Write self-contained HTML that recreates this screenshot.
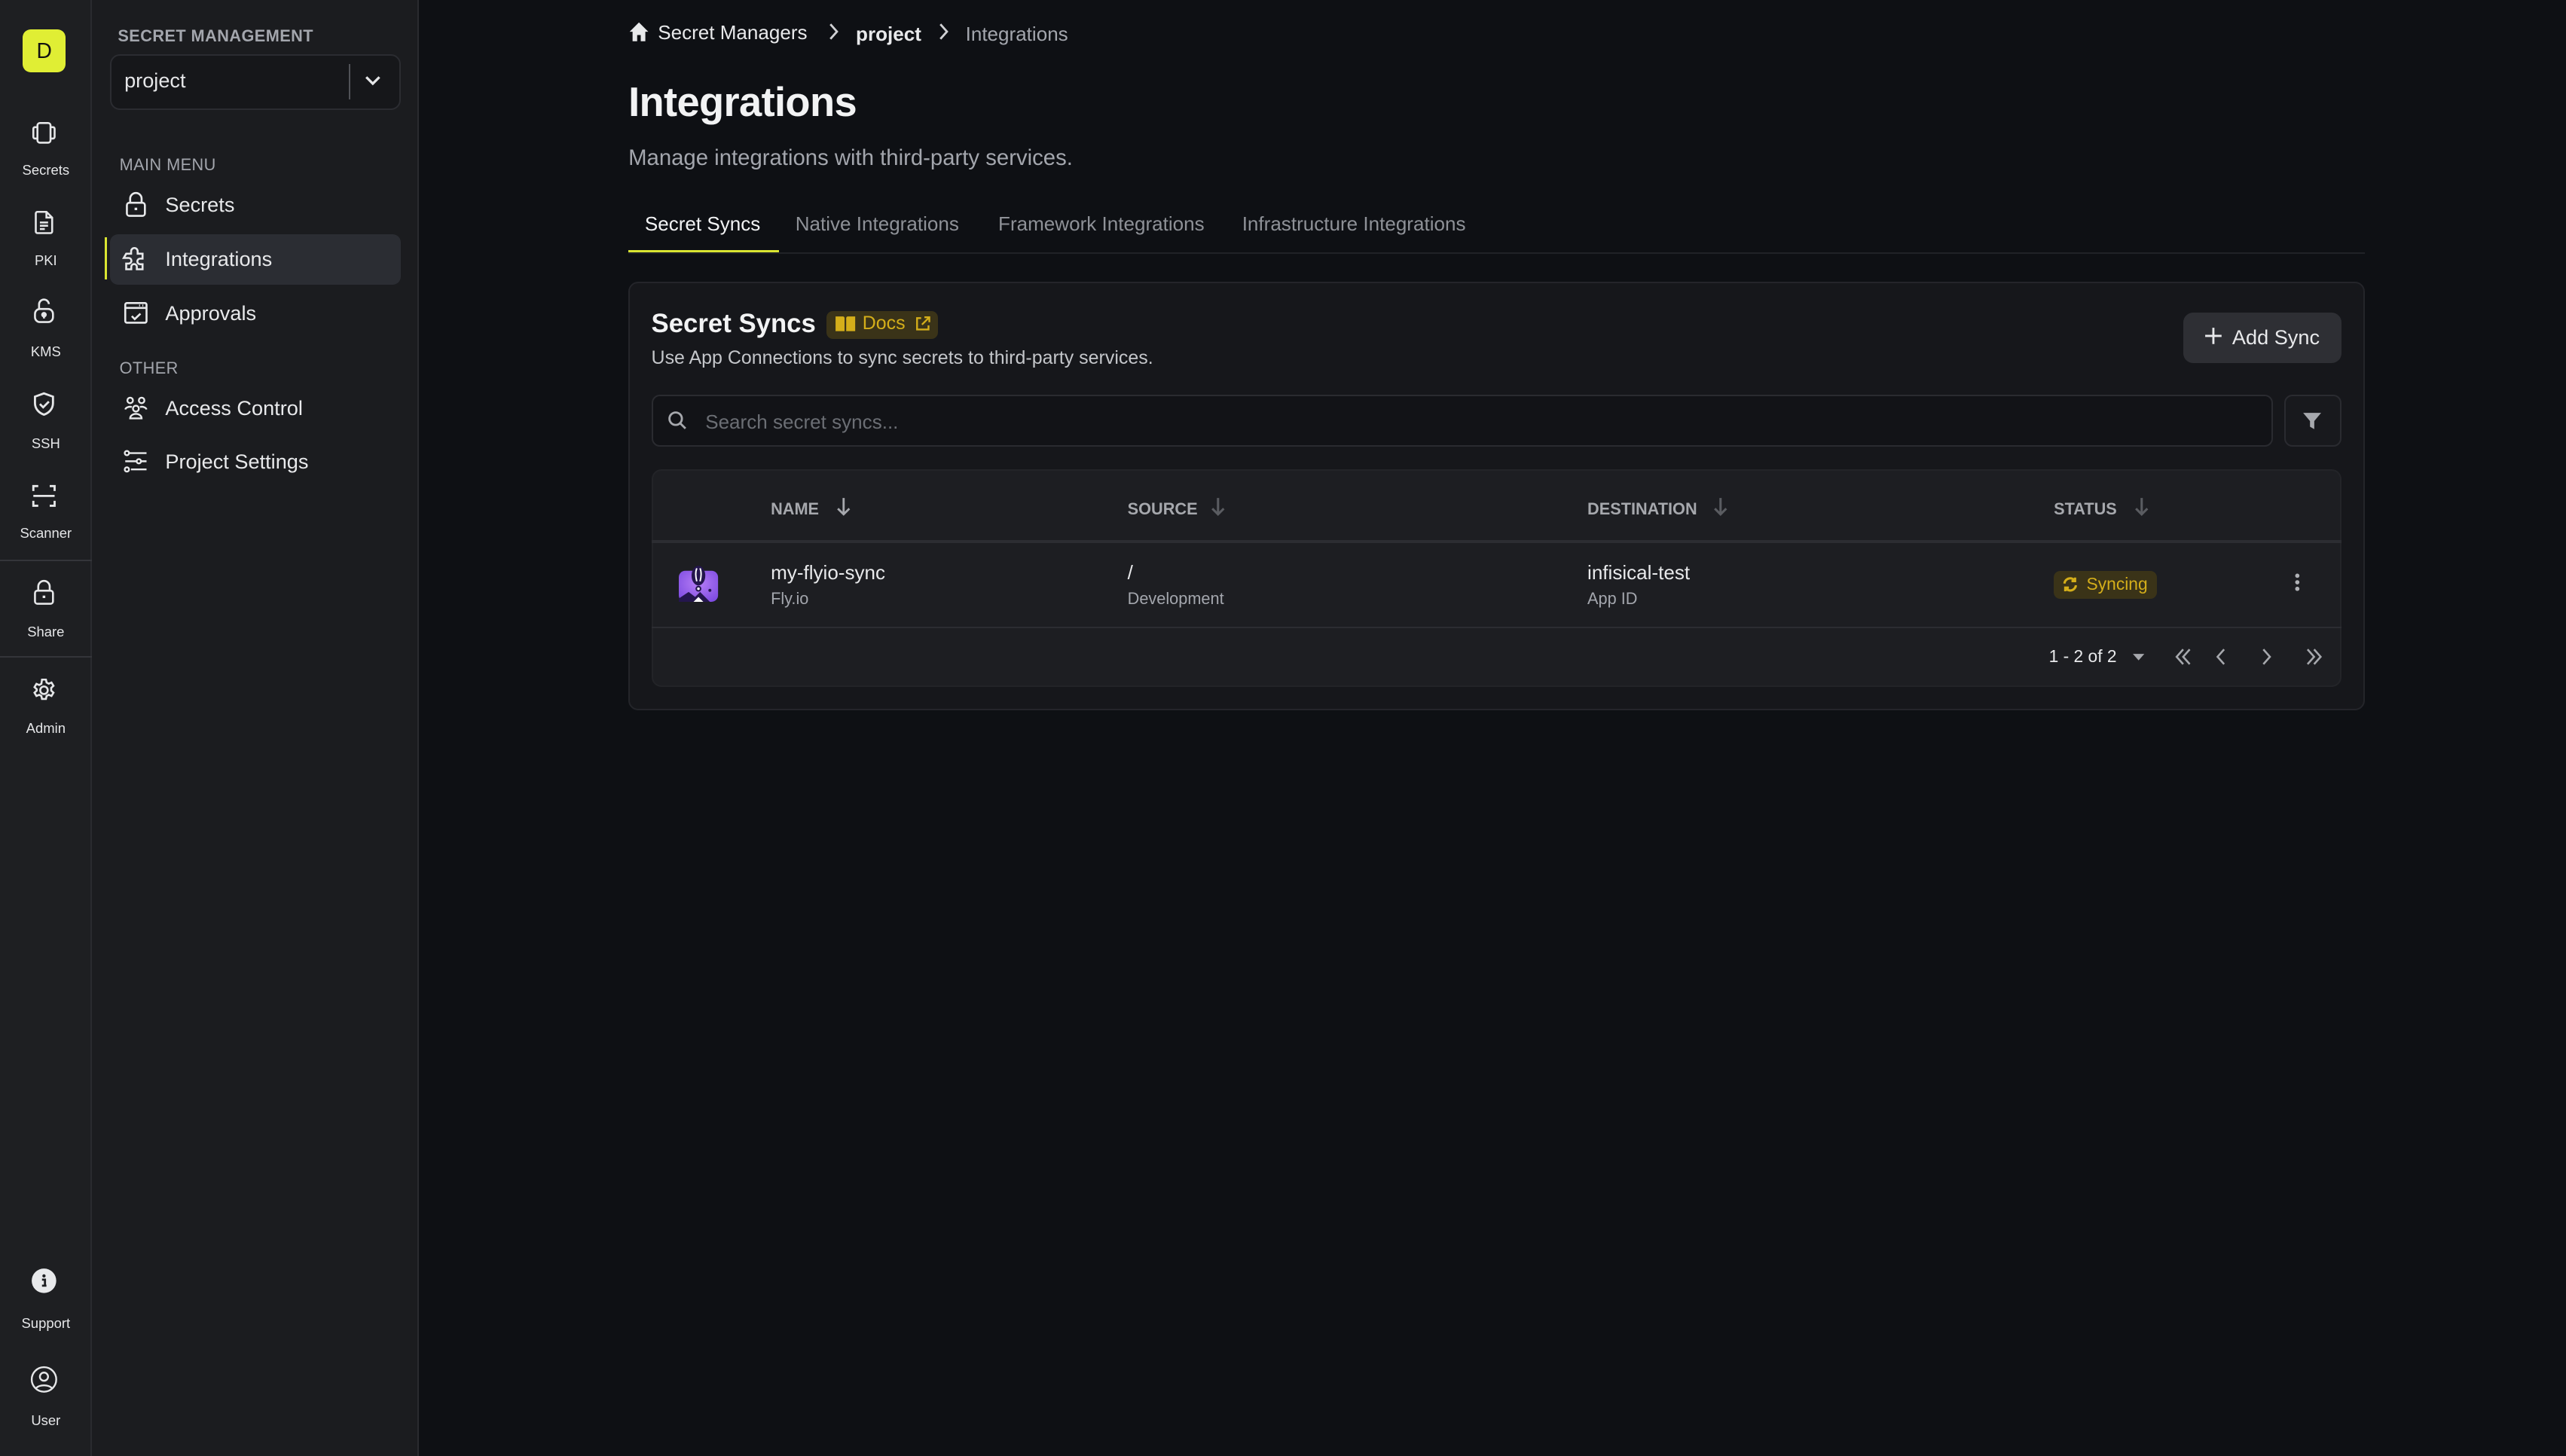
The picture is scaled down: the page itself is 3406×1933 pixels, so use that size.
<!DOCTYPE html>
<html><head><meta charset="utf-8">
<style>
*{box-sizing:border-box;margin:0;padding:0}
html,body{width:3406px;height:1932px;overflow:hidden;background:#0e1014}
#root{position:absolute;left:0;top:0;width:1568px;height:889.5px;zoom:2.1722;background:#0e1014;font-family:"Liberation Sans",sans-serif;color:#e5e6e8}
.a{position:absolute;white-space:nowrap}
.rail{position:absolute;left:0;top:0;width:56px;height:890px;background:#1e1f22;border-right:1px solid #2a2b2f}
.rl{position:absolute;width:56px;text-align:center;font-size:8.5px;color:#e5e6e8}
.ri{position:absolute;left:19px;width:16px;height:16px}
.side{position:absolute;left:56px;top:0;width:200px;height:890px;background:#1b1c1f;border-right:1px solid #2a2b2f}
.sec{font-size:10px;color:#a3a6ad;letter-spacing:.2px}
.mi{font-size:12.5px;color:#e8e9eb}
.ic{position:absolute;width:16px;height:16px}
svg{overflow:visible}
.th{font-size:10px;font-weight:bold;color:#a6a8ad}
.arr{stroke:#5a5c61;stroke-width:1.4;fill:none}
</style></head><body><div id="root">

<div class="rail">
  <div class="a" style="left:14px;top:18px;width:26px;height:26px;background:#e0ee34;border-radius:5px;color:#111;font-size:13px;text-align:center;line-height:26px">D</div>
  <svg class="ri" style="top:73px" viewBox="0 0 16 16" fill="none" stroke="#e5e6e8" stroke-width="1.2"><rect x="4" y="2" width="8" height="12" rx="1.5"/><path d="M4 4.5H2.5a1 1 0 0 0-1 1v5a1 1 0 0 0 1 1H4M12 4.5h1.5a1 1 0 0 1 1 1v5a1 1 0 0 1-1 1H12"/></svg>
  <div class="rl" style="top:99px">Secrets</div>
  <svg class="ri" style="top:128px" viewBox="0 0 16 16" fill="none" stroke="#e5e6e8" stroke-width="1.2"><path d="M3 2.5a1 1 0 0 1 1-1h5.5L13 5v8.5a1 1 0 0 1-1 1H4a1 1 0 0 1-1-1z M9.5 1.5V5H13M5.5 8h5M5.5 10h5M5.5 12h3"/></svg>
  <div class="rl" style="top:154px">PKI</div>
  <svg class="ri" style="top:182px" viewBox="0 0 16 16" fill="none" stroke="#e5e6e8" stroke-width="1.2"><rect x="2.5" y="7" width="11" height="8" rx="3"/><path d="M5 7V4.5a3 3 0 0 1 6-0.5"/><circle cx="8" cy="10.5" r="1.1" fill="#e5e6e8"/><path d="M8 11v1.8"/></svg>
  <div class="rl" style="top:210px">KMS</div>
  <svg class="ri" style="top:239px" viewBox="0 0 16 16" fill="none" stroke="#e5e6e8" stroke-width="1.3"><path d="M8 1.5L2.5 3.5v4c0 3.5 2.5 6 5.5 7 3-1 5.5-3.5 5.5-7v-4z"/><path d="M5.5 8l2 2 3.5-3.5"/></svg>
  <div class="rl" style="top:266px">SSH</div>
  <svg class="ri" style="top:295px" viewBox="0 0 16 16" fill="none" stroke="#e5e6e8" stroke-width="1.3"><path d="M1.5 5V2h3M11.5 2h3v3M14.5 11v3h-3M4.5 14h-3v-3M1.5 8h13"/></svg>
  <div class="rl" style="top:321px">Scanner</div>
  <div class="a" style="left:0;top:342px;width:56px;height:1px;background:#34353a"></div>
  <svg class="ri" style="top:354px" viewBox="0 0 16 16" fill="none" stroke="#e5e6e8" stroke-width="1.2"><rect x="2.5" y="7" width="11" height="8" rx="1.5"/><path d="M4.5 7V4.5a3.5 3.5 0 0 1 7 0V7"/><path d="M8 10v1.5" stroke-width="1.6"/></svg>
  <div class="rl" style="top:381px">Share</div>
  <div class="a" style="left:0;top:401px;width:56px;height:1px;background:#34353a"></div>
  <svg class="ri" style="top:414px" viewBox="0 0 16 16" fill="none" stroke="#e5e6e8" stroke-width="1.2"><circle cx="8" cy="8" r="2.3"/><path d="M6.8 1.5h2.4l.4 1.8 1.3.7 1.7-.7 1.2 2-1.4 1.3v1.6l1.4 1.3-1.2 2-1.7-.7-1.3.7-.4 1.8H6.8l-.4-1.8-1.3-.7-1.7.7-1.2-2 1.4-1.3V7.4L2.2 6.1l1.2-2 1.7.7 1.3-.7z"/></svg>
  <div class="rl" style="top:440px">Admin</div>
  <svg class="ri" style="top:775px" viewBox="0 0 16 16"><circle cx="8" cy="8" r="7.5" fill="#e8e9eb"/><circle cx="8" cy="5" r="1" fill="#1e1f22"/><path d="M6.8 7.3H8.6V11H9.5M6.8 11H9.5" stroke="#1e1f22" stroke-width="1.3" fill="none"/></svg>
  <div class="rl" style="top:804px">Support</div>
  <svg class="ri" style="top:835px" viewBox="0 0 16 16" fill="none" stroke="#e5e6e8" stroke-width="1.1"><circle cx="8" cy="8" r="7.5"/><circle cx="8" cy="6.3" r="2.5"/><path d="M3.2 13.2a6 4 0 0 1 9.6 0"/></svg>
  <div class="rl" style="top:863px">User</div>
</div>

<div class="side">
  <div class="a sec" style="left:16px;top:16px;font-weight:bold">SECRET MANAGEMENT</div>
  <div class="a" style="left:11px;top:33px;width:178px;height:34px;background:#16171a;border:1px solid #2b2c31;border-radius:6px"></div>
  <div class="a" style="left:20px;top:42px;font-size:12.5px;color:#e6e7e9">project</div>
  <div class="a" style="left:157px;top:39px;width:1px;height:22px;background:#505257"></div>
  <svg class="a" style="left:167px;top:45px" width="10" height="8" viewBox="0 0 10 8" fill="none" stroke="#e5e6e8" stroke-width="1.5"><path d="M1 2l4 4 4-4"/></svg>
  <div class="a sec" style="left:17px;top:95px">MAIN MENU</div>
  <svg class="ic" style="left:19px;top:117px" viewBox="0 0 16 16" fill="none" stroke="#e8e9eb" stroke-width="1.2"><rect x="2.5" y="7" width="11" height="8" rx="1.5"/><path d="M4.5 7V4.5a3.5 3.5 0 0 1 7 0V7"/><path d="M8 10v1.5" stroke-width="1.6"/></svg>
  <div class="a mi" style="left:45px;top:118px">Secrets</div>
  <div class="a" style="left:8px;top:145px;width:1.2px;height:26px;background:#d9e531"></div>
  <div class="a" style="left:11px;top:143px;width:178px;height:31px;background:#2b2d33;border-radius:5px"></div>
  <svg class="ic" style="left:18px;top:150px" viewBox="0 0 16 16" fill="none" stroke="#e8e9eb" stroke-width="1.2"><path d="M6 3.5a2 2 0 0 1 4 0V5h3v3h-1.5a1.7 1.7 0 0 0 0 3.4H13V14.5H9.5V13a1.7 1.7 0 0 0-3.4 0v1.5H3V11h1.5a1.7 1.7 0 0 0 0-3.4H1.5L3 5h3z"/></svg>
  <div class="a mi" style="left:45px;top:151px">Integrations</div>
  <svg class="ic" style="left:19px;top:183px" viewBox="0 0 16 16" fill="none" stroke="#e8e9eb" stroke-width="1.2"><rect x="1.5" y="2" width="13" height="12" rx="1"/><path d="M1.5 5h13M5.5 10l1.8 1.8 3.5-3.3M10 3.5h.5M12 3.5h.5"/></svg>
  <div class="a mi" style="left:45px;top:184px">Approvals</div>
  <div class="a sec" style="left:17px;top:219px">OTHER</div>
  <svg class="ic" style="left:19px;top:241px" viewBox="0 0 16 16" fill="none" stroke="#e8e9eb" stroke-width="1.1"><circle cx="4.5" cy="3.5" r="1.7"/><circle cx="11.5" cy="3.5" r="1.7"/><circle cx="8" cy="8.5" r="1.8"/><path d="M1.5 9a3 2 0 0 1 4-1.5M14.5 9a3 2 0 0 0-4-1.5M4.5 14.5a3.5 2.8 0 0 1 7 0z"/></svg>
  <div class="a mi" style="left:45px;top:242px">Access Control</div>
  <svg class="ic" style="left:19px;top:274px" viewBox="0 0 16 16" fill="none" stroke="#e8e9eb" stroke-width="1.1"><path d="M4 3h10.5M1.5 8H8.5M11 8h3.5M5 13h9.5"/><circle cx="2.5" cy="3" r="1.3"/><circle cx="9.8" cy="8" r="1.3"/><circle cx="2.5" cy="13" r="1.3"/></svg>
  <div class="a mi" style="left:45px;top:275px">Project Settings</div>
</div>

<!-- main -->
<svg class="a" style="left:384px;top:13px" width="13" height="13" viewBox="0 0 13 13"><path d="M6.5 0.8L0.8 6.5h1.8v5.8h2.8V8.5h2.2v3.8h2.8V6.5h1.8z" fill="#e8e9eb"/></svg>
<div class="a" style="left:402px;top:13px;font-size:12px;color:#e8e9eb">Secret Managers</div>
<svg class="a" style="left:506px;top:14px" width="7" height="11" viewBox="0 0 7 11" fill="none" stroke="#d0d1d4" stroke-width="1.3"><path d="M1.5 1l4 4.5-4 4.5"/></svg>
<div class="a" style="left:523px;top:14px;font-size:12px;color:#e8e9eb;font-weight:bold">project</div>
<svg class="a" style="left:573px;top:14px" width="7" height="11" viewBox="0 0 7 11" fill="none" stroke="#d0d1d4" stroke-width="1.3"><path d="M1.5 1l4 4.5-4 4.5"/></svg>
<div class="a" style="left:590px;top:14px;font-size:12px;color:#a3a6ad">Integrations</div>

<div class="a" style="left:384px;top:48px;font-size:25px;font-weight:bold;color:#f2f3f4;letter-spacing:-.3px">Integrations</div>
<div class="a" style="left:384px;top:89px;font-size:13.5px;color:#a3a6ad">Manage integrations with third-party services.</div>

<div class="a" style="left:394px;top:130px;font-size:12px;color:#f2f3f4">Secret Syncs</div>
<div class="a" style="left:486px;top:130px;font-size:12px;color:#8e9197">Native Integrations</div>
<div class="a" style="left:610px;top:130px;font-size:12px;color:#8e9197">Framework Integrations</div>
<div class="a" style="left:759px;top:130px;font-size:12px;color:#8e9197">Infrastructure Integrations</div>
<div class="a" style="left:384px;top:154px;width:1061px;height:1.2px;background:#202227"></div>
<div class="a" style="left:384px;top:153px;width:92px;height:1.2px;background:#d9e531"></div>

<div class="a" style="left:384px;top:172px;width:1061px;height:262px;background:#16171b;border:1px solid #24252a;border-radius:6px"></div>
<div class="a" style="left:398px;top:189px;font-size:16px;font-weight:bold;color:#f2f3f4">Secret Syncs</div>
<div class="a" style="left:505px;top:190px;width:68px;height:17px;background:#3a3318;border-radius:4px"></div>
<svg class="a" style="left:510px;top:193px" width="13" height="10" viewBox="0 0 13 10"><path d="M0.5 0.5h4.5a1 1 0 0 1 1 1V9.5H0.5zM7 1.5a1 1 0 0 1 1-1h4.5v9H7z" fill="#d4ae1a"/></svg>
<div class="a" style="left:527px;top:191px;font-size:11.5px;color:#d4ae1a">Docs</div>
<svg class="a" style="left:559px;top:193px" width="10" height="10" viewBox="0 0 10 10" fill="none" stroke="#d4ae1a" stroke-width="1.1"><path d="M4 1.5H1.5v7h7V6M6 1h3v3M9 1L4.5 5.5"/></svg>
<div class="a" style="left:398px;top:212px;font-size:11.5px;color:#c4c6ca">Use App Connections to sync secrets to third-party services.</div>

<div class="a" style="left:1334px;top:191px;width:97px;height:31px;background:#2e2f34;border-radius:6px"></div>
<svg class="a" style="left:1347px;top:200px" width="11" height="11" viewBox="0 0 11 11" stroke="#e8e9eb" stroke-width="1.3"><path d="M5.5 0.5v10M0.5 5.5h10"/></svg>
<div class="a" style="left:1364px;top:199px;font-size:12.5px;color:#e8e9eb">Add Sync</div>

<div class="a" style="left:398px;top:241px;width:991px;height:32px;background:#121317;border:1px solid #2a2b30;border-radius:5px"></div>
<svg class="a" style="left:408px;top:251px" width="12" height="12" viewBox="0 0 12 12" fill="none" stroke="#a6a8ad" stroke-width="1.3"><circle cx="5" cy="5" r="3.8"/><path d="M7.8 7.8L11 11"/></svg>
<div class="a" style="left:431px;top:251px;font-size:12px;color:#6b6e74">Search secret syncs...</div>
<div class="a" style="left:1396px;top:241px;width:35px;height:32px;background:#18191d;border:1px solid #2a2b30;border-radius:5px"></div>
<svg class="a" style="left:1407px;top:252px" width="12" height="11" viewBox="0 0 12 11"><path d="M0.5 0.5h11L7.3 5.5V10.5L4.7 9V5.5z" fill="#a6a8ad"/></svg>

<div class="a" style="left:398px;top:287px;width:1033px;height:133px;background:#1d1e22;border:1px solid #232428;border-radius:6px"></div>
<div class="a" style="left:398px;top:330px;width:1033px;height:2px;background:#2c2d32"></div>
<div class="a" style="left:398px;top:383px;width:1033px;height:1px;background:#2c2d32"></div>

<div class="a th" style="left:471px;top:305px">NAME</div>
<svg class="a" style="left:511px;top:304px" width="9" height="12" viewBox="0 0 9 12"><path d="M4.5 0.5v10M1 7l3.5 3.5L8 7" fill="none" stroke="#a6a8ad" stroke-width="1.3"/></svg>
<div class="a th" style="left:689px;top:305px">SOURCE</div>
<svg class="a" style="left:740px;top:304px" width="9" height="12" viewBox="0 0 9 12"><path class="arr" d="M4.5 0.5v10M1 7l3.5 3.5L8 7"/></svg>
<div class="a th" style="left:970px;top:305px">DESTINATION</div>
<svg class="a" style="left:1047px;top:304px" width="9" height="12" viewBox="0 0 9 12"><path class="arr" d="M4.5 0.5v10M1 7l3.5 3.5L8 7"/></svg>
<div class="a th" style="left:1255px;top:305px">STATUS</div>
<svg class="a" style="left:1304px;top:304px" width="9" height="12" viewBox="0 0 9 12"><path class="arr" d="M4.5 0.5v10M1 7l3.5 3.5L8 7"/></svg>

<svg class="a" style="left:415px;top:345px" width="24" height="24" viewBox="0 0 24 24">
<defs><radialGradient id="g" cx="50%" cy="40%" r="70%"><stop offset="0" stop-color="#b67ef5"/><stop offset="1" stop-color="#7c4ae0"/></radialGradient></defs>
<rect x="0" y="4" width="24" height="19" rx="4" fill="url(#g)"/>
<path d="M0 21l6-4 4 3 3-3 6 6H0z" fill="#24164d"/><path d="M9 23l3-3 3 3z" fill="#fff"/>
<ellipse cx="12" cy="7" rx="4.2" ry="6" fill="#24164d"/><path d="M11 2.5c-0.8 2-0.8 5 0 8M13 2.5c0.8 2 0.8 5 0 8" stroke="#fff" stroke-width="0.9" fill="none"/>
<circle cx="12" cy="15" r="1.3" fill="#fff" stroke="#24164d"/><circle cx="19" cy="16" r="0.9" fill="#24164d"/></svg>
<div class="a" style="left:471px;top:343px;font-size:12px;color:#e8e9eb">my-flyio-sync</div>
<div class="a" style="left:471px;top:360px;font-size:10px;color:#a3a6ad">Fly.io</div>
<div class="a" style="left:689px;top:343px;font-size:12px;color:#e8e9eb">/</div>
<div class="a" style="left:689px;top:360px;font-size:10px;color:#a3a6ad">Development</div>
<div class="a" style="left:970px;top:343px;font-size:12px;color:#e8e9eb">infisical-test</div>
<div class="a" style="left:970px;top:360px;font-size:10px;color:#a3a6ad">App ID</div>
<div class="a" style="left:1255px;top:349px;width:63px;height:17px;background:#3a3318;border-radius:4px"></div>
<svg class="a" style="left:1260px;top:352px" width="10" height="10" viewBox="0 0 10 10" fill="none" stroke="#d4ae1a" stroke-width="1.4"><path d="M1.5 4.5A3.5 3.5 0 0 1 8 3M8.5 5.5A3.5 3.5 0 0 1 2 7M8 0.8V3H5.8M2 9.2V7h2.2"/></svg>
<div class="a" style="left:1275px;top:351px;font-size:10.5px;color:#d4ae1a">Syncing</div>
<svg class="a" style="left:1402px;top:350px" width="4" height="12" viewBox="0 0 4 12" fill="#b0b2b6"><circle cx="2" cy="2" r="1.3"/><circle cx="2" cy="6" r="1.3"/><circle cx="2" cy="10" r="1.3"/></svg>

<div class="a" style="left:1252px;top:395px;font-size:10.5px;color:#e8e9eb">1 - 2 of 2</div>
<svg class="a" style="left:1303px;top:399px" width="8" height="5" viewBox="0 0 8 5"><path d="M0.5 0.5h7L4 4.5z" fill="#a6a8ad"/></svg>
<svg class="a" style="left:1329px;top:396px" width="100" height="11" viewBox="0 0 100 11" fill="none" stroke="#a6a8ad" stroke-width="1.2">
<path d="M5 1L1 5.5 5 10M9 1L5 5.5 9 10M30 1l-4 4.5 4 4.5M54 1l4 4.5-4 4.5M81 1l4 4.5-4 4.5M85 1l4 4.5-4 4.5"/></svg>

</div></body></html>
